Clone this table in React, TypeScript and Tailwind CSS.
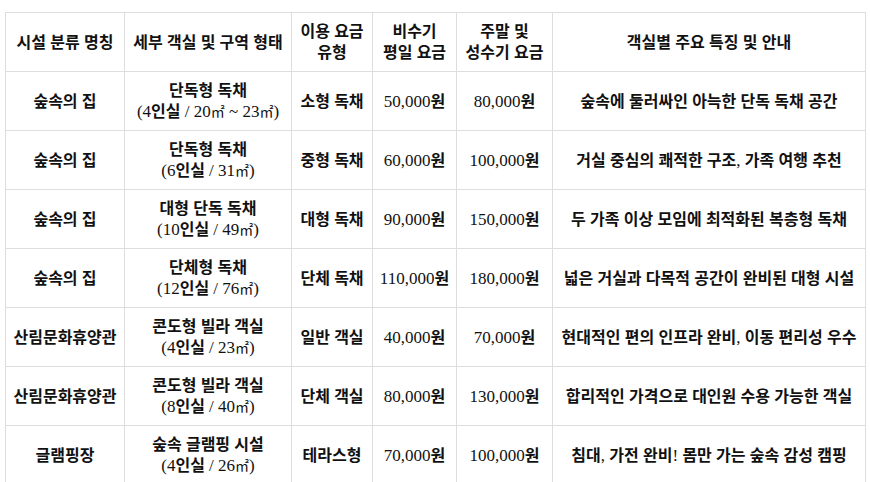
import React from "react";

const rows: [string, string, string, string, string, string, string][] = [
  ["숲속의 집", "단독형 독채", "(4인실 / 20㎡ ~ 23㎡)", "소형 독채", "50,000원", "80,000원", "숲속에 둘러싸인 아늑한 단독 독채 공간"],
  ["숲속의 집", "단독형 독채", "(6인실 / 31㎡)", "중형 독채", "60,000원", "100,000원", "거실 중심의 쾌적한 구조, 가족 여행 추천"],
  ["숲속의 집", "대형 단독 독채", "(10인실 / 49㎡)", "대형 독채", "90,000원", "150,000원", "두 가족 이상 모임에 최적화된 복층형 독채"],
  ["숲속의 집", "단체형 독채", "(12인실 / 76㎡)", "단체 독채", "110,000원", "180,000원", "넓은 거실과 다목적 공간이 완비된 대형 시설"],
  ["산림문화휴양관", "콘도형 빌라 객실", "(4인실 / 23㎡)", "일반 객실", "40,000원", "70,000원", "현대적인 편의 인프라 완비, 이동 편리성 우수"],
  ["산림문화휴양관", "콘도형 빌라 객실", "(8인실 / 40㎡)", "단체 객실", "80,000원", "130,000원", "합리적인 가격으로 대인원 수용 가능한 객실"],
  ["글램핑장", "숲속 글램핑 시설", "(4인실 / 26㎡)", "테라스형", "70,000원", "100,000원", "침대, 가전 완비! 몸만 가는 숲속 감성 캠핑"],
];

function T({ s }: { s: string }) {
  const parts = s.match(/[\uAC00-\uD7A3]+|㎡|[^\uAC00-\uD7A3㎡]+/g) || [];
  return (
    <>
      {parts.map((p, i) => {
        if (p === "㎡") {
          return (
            <span key={i} className="text-[14px] leading-[12px]">{p}</span>
          );
        }
        if (/[\uAC00-\uD7A3]/.test(p)) {
          return (
            <span key={i} className="font-semibold leading-[14px]">{p}</span>
          );
        }
        return (
          <span key={i} className="text-[17px] leading-[14px]">{p}</span>
        );
      })}
    </>
  );
}

const cell = "border border-[#dddddd] px-1 py-2 text-center align-middle font-normal";

export default function App() {
  return (
    <div
      className="w-[870px] h-[482px] overflow-hidden bg-white text-[#111111]"
      style={{ fontFamily: '"Liberation Serif", "Noto Sans CJK KR", serif' }}
    >
      <div className="pl-[5px] pt-[12px]">
        <table className="table-fixed border-collapse w-[860px] text-[16px] leading-[21px]">
          <colgroup>
            <col className="w-[119px]" />
            <col className="w-[167px]" />
            <col className="w-[81px]" />
            <col className="w-[84px]" />
            <col className="w-[96px]" />
            <col className="w-[313px]" />
          </colgroup>
          <thead>
            <tr className="h-[59px]">
              <th className={cell}><T s="시설 분류 명칭" /></th>
              <th className={cell}><T s="세부 객실 및 구역 형태" /></th>
              <th className={cell}><T s="이용 요금" /><br /><T s="유형" /></th>
              <th className={cell}><T s="비수기" /><br /><T s="평일 요금" /></th>
              <th className={cell}><T s="주말 및" /><br /><T s="성수기 요금" /></th>
              <th className={cell}><T s="객실별 주요 특징 및 안내" /></th>
            </tr>
          </thead>
          <tbody>
            {rows.map((r, i) => (
              <tr key={i} className="h-[59px]">
                <td className={cell}><T s={r[0]} /></td>
                <td className={cell}><T s={r[1]} /><br /><T s={r[2]} /></td>
                <td className={cell}><T s={r[3]} /></td>
                <td className={cell}><T s={r[4]} /></td>
                <td className={cell}><T s={r[5]} /></td>
                <td className={cell}><T s={r[6]} /></td>
              </tr>
            ))}
          </tbody>
        </table>
      </div>
    </div>
  );
}
